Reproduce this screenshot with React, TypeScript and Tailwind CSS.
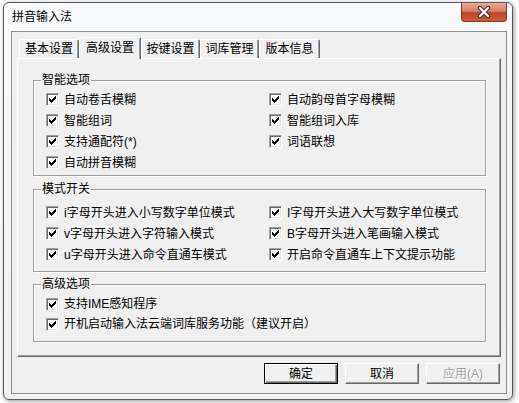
import React from "react";

const smartItems: (string | null)[] = [
  "自动卷舌模糊",
  "自动韵母首字母模糊",
  "智能组词",
  "智能组词入库",
  "支持通配符(*)",
  "词语联想",
  "自动拼音模糊",
  null,
];

const modeItems: string[] = [
  "i字母开头进入小写数字单位模式",
  "I字母开头进入大写数字单位模式",
  "v字母开头进入字符输入模式",
  "B字母开头进入笔画输入模式",
  "u字母开头进入命令直通车模式",
  "开启命令直通车上下文提示功能",
];

const tabs = [
  { label: "基本设置", w: "w-[60px]" },
  { label: "高级设置", w: "w-[62px]", active: true },
  { label: "按键设置", w: "w-[59px]" },
  { label: "词库管理", w: "w-[59px]" },
  { label: "版本信息", w: "w-[61px]" },
];

function CheckBox() {
  return (
    <span className="flex h-[13px] w-[13px] shrink-0 items-center justify-center border border-t-[#a0a0a0] border-l-[#a0a0a0] border-r-white border-b-white bg-white shadow-[inset_1px_1px_0_#696969,inset_-1px_-1px_0_#e3e3e3]">
      <svg width="7" height="7" viewBox="0 0 7 7" shapeRendering="crispEdges">
        <path d="M0 2h1v1h1v1h1V3h1V2h1V1h1V0h1v3H6v1H5v1H4v1H3v1H2V6H1V5H0z" fill="#000" />
      </svg>
    </span>
  );
}

function Option({ label, rowH = "h-[21px]" }: { label: string; rowH?: string }) {
  return (
    <div className={`flex items-center gap-[5px] ${rowH}`}>
      <CheckBox />
      <span className="whitespace-nowrap">{label}</span>
    </div>
  );
}

function GroupBox({ title, className, children }: { title: string; className: string; children: React.ReactNode }) {
  return (
    <div className={`relative ml-[15px] w-[453px] border border-[#a0a0a0] shadow-[inset_1px_1px_0_#fff,1px_1px_0_#fff] ${className}`}>
      <span className="absolute top-[-8px] left-[7px] bg-[#f0f0f0] px-[1px] leading-[14px]">{title}</span>
      {children}
    </div>
  );
}

function Button({ label, isDefault, disabled }: { label: string; isDefault?: boolean; disabled?: boolean }) {
  if (isDefault) {
    return (
      <button className="h-[21px] w-[74px] border border-black bg-[#f0f0f0] shadow-[inset_1px_1px_0_#fff,inset_-1px_-1px_0_#696969,inset_-2px_-2px_0_#a0a0a0]">
        {label}
      </button>
    );
  }
  return (
    <button
      className={`h-[21px] w-[74px] border border-t-white border-l-white border-r-[#696969] border-b-[#696969] bg-[#f0f0f0] shadow-[inset_-1px_-1px_0_#a0a0a0] ${
        disabled ? "text-[#a0a0a0] [text-shadow:1px_1px_0_#fff]" : ""
      }`}
    >
      {label}
    </button>
  );
}

export default function App() {
  return (
    <div className="h-[403px] w-[519px] bg-white pt-[2px] pl-[3px] font-['Liberation_Sans','Noto_Sans_CJK_SC',sans-serif] text-[12px] leading-none text-black">
      <div className="h-[398px] w-[510px] rounded-[6px] border border-[#5b5b5b] bg-[linear-gradient(180deg,#f9fafb,#eff1f3)] shadow-[1px_1px_4px_rgba(0,0,0,0.45)]">
        {/* title bar */}
        <div className="flex h-[28px] items-center justify-between">
          <span className="pl-[8px]">拼音输入法</span>
          <button className="mr-[5px] flex h-[19px] w-[46px] items-center justify-center self-start rounded-b-[4px] border border-t-0 border-[#8a3a2a] bg-[linear-gradient(180deg,#e9a998,#d77d66_45%,#c24428_55%,#cf5c3e)]">
            <svg width="14" height="12" viewBox="0 0 14 12">
              <path d="M3 2l8 8M11 2l-8 8" stroke="#3b2a28" strokeWidth="4.2" strokeLinecap="round" />
              <path d="M3 2l8 8M11 2l-8 8" stroke="#fff" strokeWidth="2.2" strokeLinecap="round" />
            </svg>
          </button>
        </div>

        {/* client area */}
        <div className="ml-[7px] h-[363px] w-[496px] border border-[#8e8f8f] bg-[#f0f0f0] px-[5px] pt-[5px]">
          {/* tab strip */}
          <div className="flex h-[21px] items-end pl-[2px]">
            {tabs.map((t) =>
              t.active ? (
                <div
                  key={t.label}
                  className={`relative z-10 mb-[-1px] flex h-[22px] ${t.w} items-center justify-center rounded-t-[2px] border border-b-0 border-t-white border-l-white border-r-[#696969] bg-[#f0f0f0] pb-[1px] shadow-[inset_-1px_0_0_#a0a0a0]`}
                >
                  {t.label}
                </div>
              ) : (
                <div
                  key={t.label}
                  className={`flex h-[19px] ${t.w} items-center justify-center rounded-t-[2px] border border-b-0 border-t-white border-l-white border-r-[#696969] bg-[#f0f0f0] shadow-[inset_-1px_0_0_#a0a0a0]`}
                >
                  {t.label}
                </div>
              )
            )}
          </div>

          {/* tab panel */}
          <div className="h-[299px] w-[484px] border border-t-white border-l-white border-r-[#696969] border-b-[#696969] pt-[14px] shadow-[inset_-1px_-1px_0_#a0a0a0]">
            <GroupBox title="智能选项" className="mt-[7px] h-[96px] pt-[8px]">
              <div className="grid grid-cols-[223px_1fr] pl-[12px]">
                {smartItems.map((it, i) => (it ? <Option key={i} label={it} /> : <div key={i} />))}
              </div>
            </GroupBox>

            <GroupBox title="模式开关" className="mt-[13px] h-[83px] pt-[12px]">
              <div className="grid grid-cols-[223px_1fr] pl-[12px]">
                {modeItems.map((it) => (
                  <Option key={it} label={it} />
                ))}
              </div>
            </GroupBox>

            <GroupBox title="高级选项" className="mt-[12px] h-[58px] pt-[9px]">
              <div className="flex flex-col pl-[12px]">
                <Option label="支持IME感知程序" rowH="h-[20px]" />
                <Option label="开机启动输入法云端词库服务功能（建议开启）" rowH="h-[20px]" />
              </div>
            </GroupBox>
          </div>

          {/* buttons */}
          <div className="mt-[6px] flex justify-end gap-[7px] pr-[1px]">
            <Button label="确定" isDefault />
            <Button label="取消" />
            <Button label="应用(A)" disabled />
          </div>
        </div>
      </div>
    </div>
  );
}
